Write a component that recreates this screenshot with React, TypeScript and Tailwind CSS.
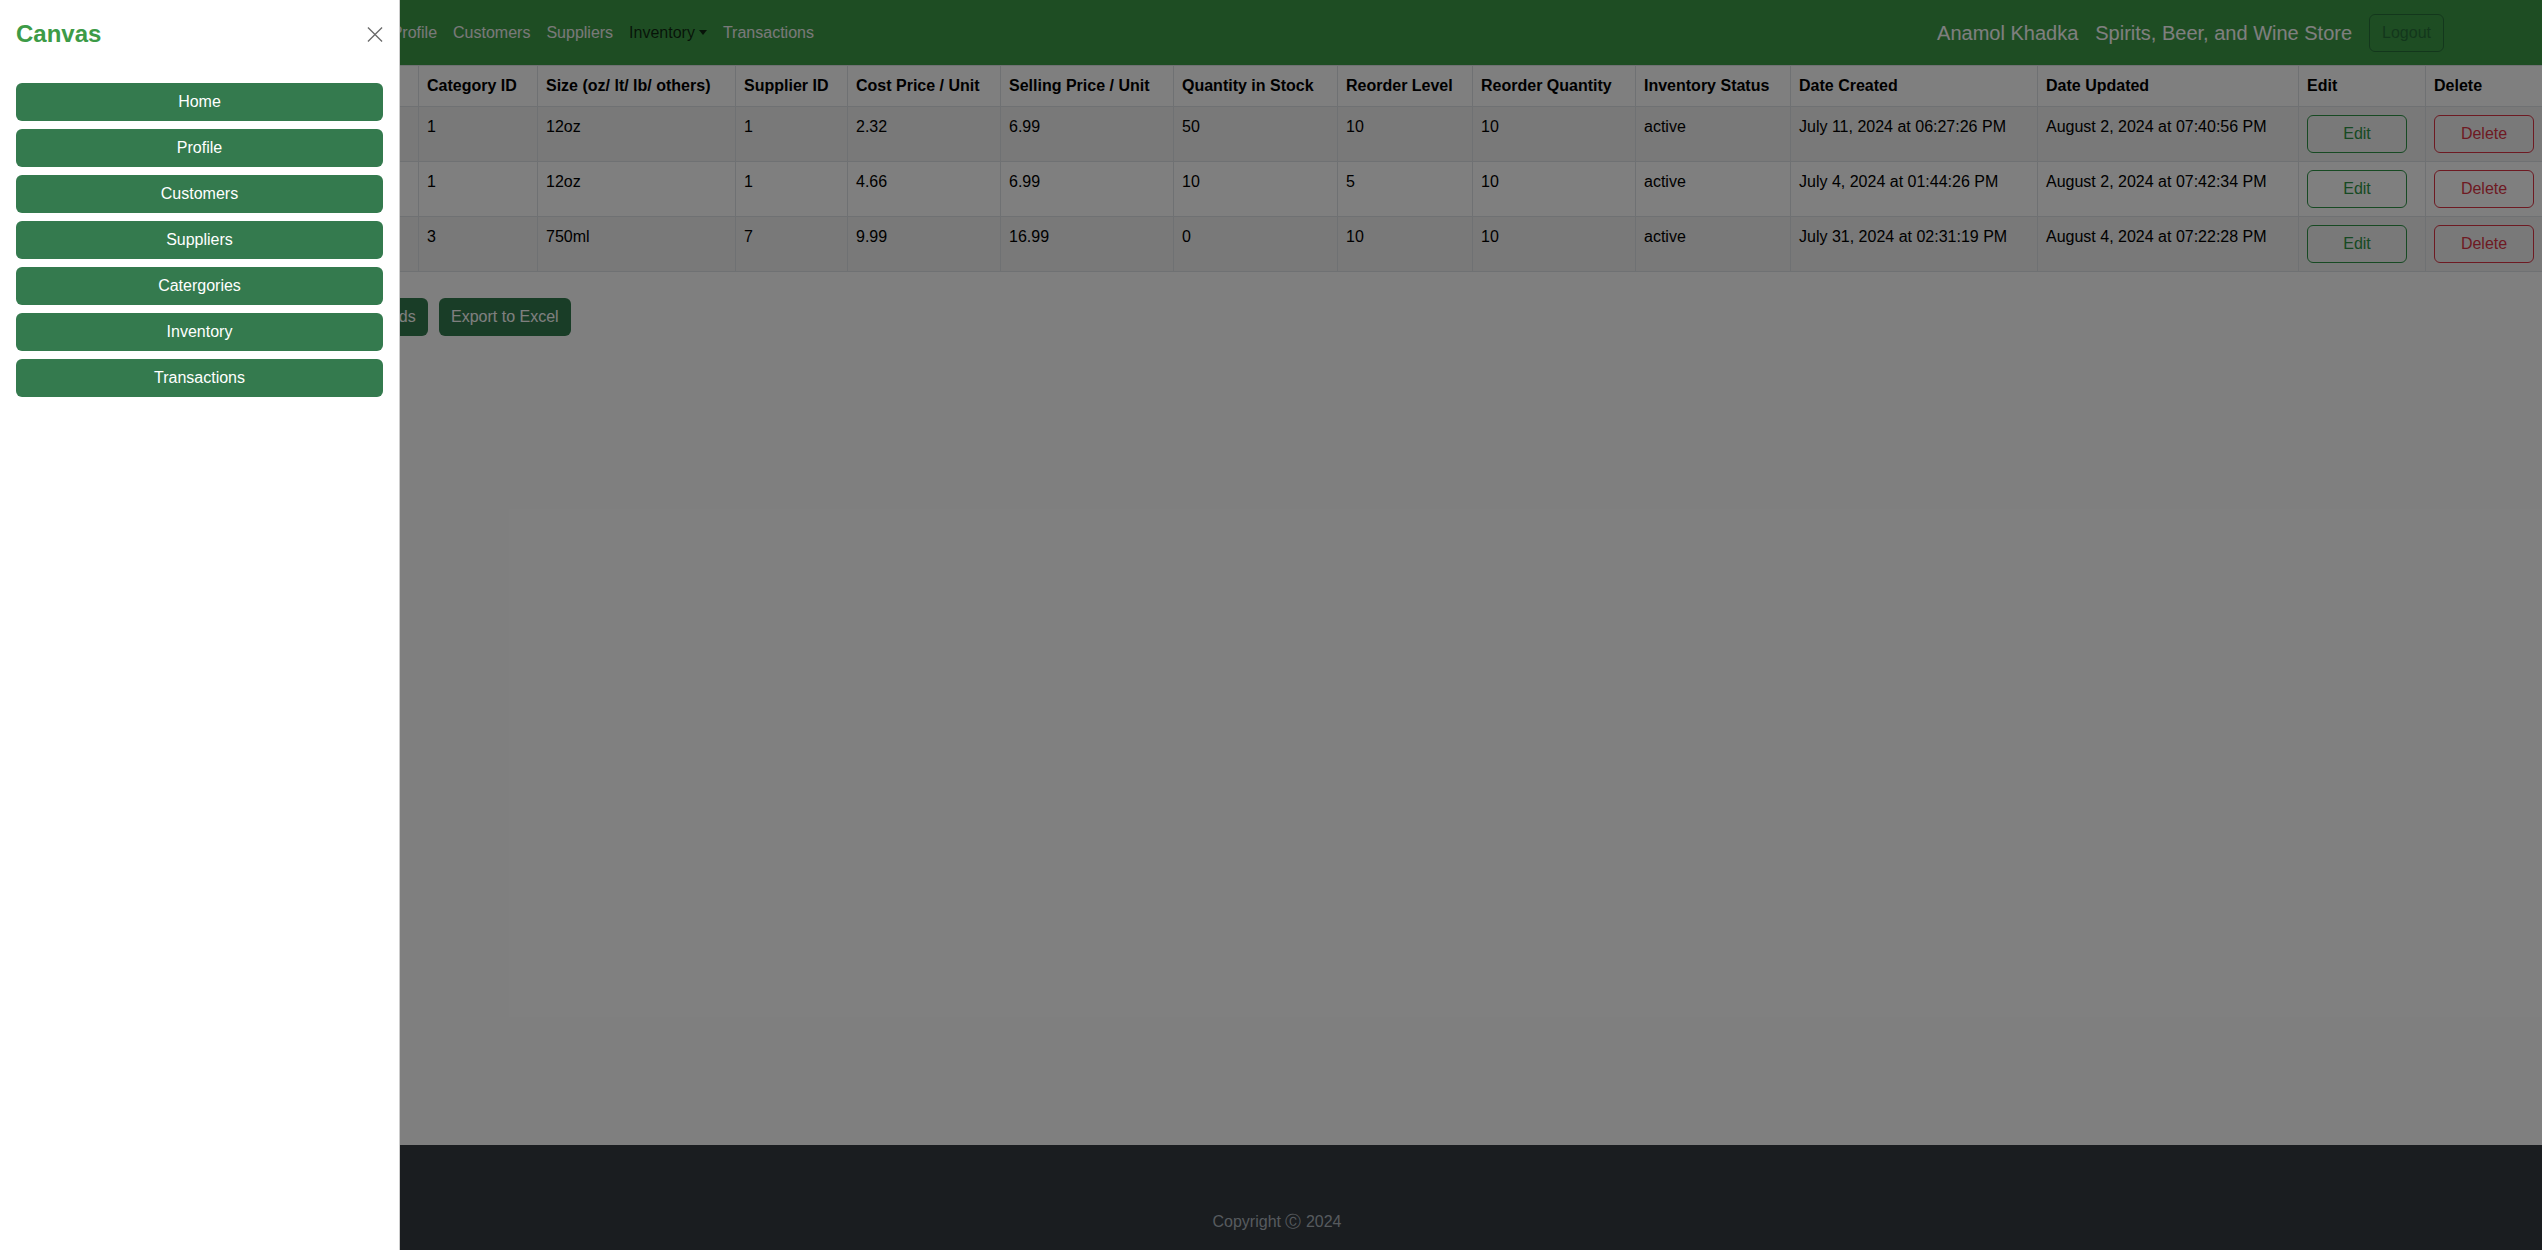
import { Fragment } from 'react';

const font = { fontFamily: '"Liberation Sans", Arial, sans-serif' };

// first two columns sit behind the open offcanvas
const columns = [
  { title: "", w: "w-[120px]" },
  { title: "", w: "w-[298px]" },
  { title: "Category ID", w: "w-[119px]" },
  { title: "Size (oz/ lt/ lb/ others)", w: "w-[198px]" },
  { title: "Supplier ID", w: "w-[112px]" },
  { title: "Cost Price / Unit", w: "w-[153px]" },
  { title: "Selling Price / Unit", w: "w-[173px]" },
  { title: "Quantity in Stock", w: "w-[164px]" },
  { title: "Reorder Level", w: "w-[135px]" },
  { title: "Reorder Quantity", w: "w-[163px]" },
  { title: "Inventory Status", w: "w-[155px]" },
  { title: "Date Created", w: "w-[247px]" },
  { title: "Date Updated", w: "w-[261px]" },
  { title: "Edit", w: "w-[127px]" },
  { title: "Delete", w: "w-[117px]" },
];

const rows = [
  ["", "", "1", "12oz", "1", "2.32", "6.99", "50", "10", "10", "active", "July 11, 2024 at 06:27:26 PM", "August 2, 2024 at 07:40:56 PM"],
  ["", "", "1", "12oz", "1", "4.66", "6.99", "10", "5", "10", "active", "July 4, 2024 at 01:44:26 PM", "August 2, 2024 at 07:42:34 PM"],
  ["", "", "3", "750ml", "7", "9.99", "16.99", "0", "10", "10", "active", "July 31, 2024 at 02:31:19 PM", "August 4, 2024 at 07:22:28 PM"],
];

const menu = ["Home", "Profile", "Customers", "Suppliers", "Catergories", "Inventory", "Transactions"];

const App = () => {
  return (
    <div className="relative flex h-screen flex-col overflow-hidden bg-white text-[#212529]" style={font}>
      {/* navbar */}
      <nav className="flex h-[65px] shrink-0 items-center bg-[#3d9b47] text-base">
        <div className="w-[325px] shrink-0" />
        <a className="px-2 text-[#f2f2f2]">Home</a>
        <a className="px-2 text-[#f2f2f2]">Profile</a>
        <a className="px-2 text-[#f2f2f2]">Customers</a>
        <a className="px-2 text-[#f2f2f2]">Suppliers</a>
        <a className="flex items-center px-2 text-black/75">
          Inventory
          <span className="ml-[4px] inline-block h-0 w-0 border-x-[4px] border-t-[5px] border-x-transparent border-t-current" />
        </a>
        <a className="px-2 text-[#f2f2f2]">Transactions</a>
        <div className="ml-auto mr-[98px] flex items-center">
          <span className="text-xl text-white">Anamol Khadka</span>
          <span className="ml-[17px] text-xl text-white">Spirits, Beer, and Wine Store</span>
          <button className="ml-[17px] h-[38px] rounded-md border border-[#276f38] px-3 text-base text-[#276f38]">Logout</button>
        </div>
      </nav>

      {/* table */}
      <main className="flex-1 overflow-hidden">
        <table className="w-[2542px] table-fixed border-collapse text-base">
          <colgroup>
            {columns.map((c, i) => (
              <col key={i} className={c.w} />
            ))}
          </colgroup>
          <thead>
            <tr className="bg-white">
              {columns.map((c, i) => (
                <th key={i} className="h-[41px] border border-[#dee2e6] px-2 py-2 text-left align-top font-bold leading-6 text-black">
                  {c.title}
                </th>
              ))}
            </tr>
          </thead>
          <tbody>
            {rows.map((r, i) => (
              <tr key={i} className={i % 2 === 0 ? "bg-[#f2f2f2]" : "bg-white"}>
                {r.map((v, j) => (
                  <td key={j} className="border border-[#dee2e6] px-2 py-2 align-top leading-6 text-black">
                    {v}
                  </td>
                ))}
                <td className="border border-[#dee2e6] px-2 py-2 align-top">
                  <button className="h-[38px] w-[100px] rounded-md border border-[#2f9447] text-base text-[#2f9447]">Edit</button>
                </td>
                <td className="border border-[#dee2e6] px-2 py-2 align-top">
                  <button className="h-[38px] w-[100px] rounded-md border border-[#dc3545] text-base text-[#dc3545]">Delete</button>
                </td>
              </tr>
            ))}
          </tbody>
        </table>

        <div className="mt-[26px] flex gap-[11px] pl-[311px]">
          <button className="h-[38px] w-[117px] rounded-md bg-[#337a4e] text-base text-white">Add Records</button>
          <button className="h-[38px] rounded-md bg-[#337a4e] px-3 text-base text-white">Export to Excel</button>
        </div>
      </main>

      {/* footer */}
      <footer className="h-[105px] shrink-0 bg-[#343a40] pt-[65px] text-center">
        <p className="pl-[12px] leading-6 text-[#adb5bd]">Copyright Ⓒ 2024</p>
      </footer>

      {/* backdrop */}
      <div className="absolute inset-0 bg-black/50" />

      {/* offcanvas */}
      <aside className="absolute left-0 top-0 flex h-full w-[400px] flex-col border-r border-black/20 bg-white">
        <div className="flex items-center justify-between p-4">
          <h5 className="text-2xl font-bold leading-9 text-[#3d9b47]">Canvas</h5>
          <button className="flex h-4 w-4 items-center justify-center" aria-label="Close">
            <svg width="17" height="17" viewBox="0 0 17 17">
              <path d="M1 1 L16 16 M16 1 L1 16" stroke="#6a6a6a" strokeWidth="1.4" fill="none" />
            </svg>
          </button>
        </div>
        <div className="flex flex-col gap-2 px-4 pt-[15px]">
          {menu.map((m) => (
            <Fragment key={m}>
              <button className="h-[38px] w-full rounded-md bg-[#347a4e] text-base text-white">{m}</button>
            </Fragment>
          ))}
        </div>
      </aside>
    </div>
  );
};

export default App;
